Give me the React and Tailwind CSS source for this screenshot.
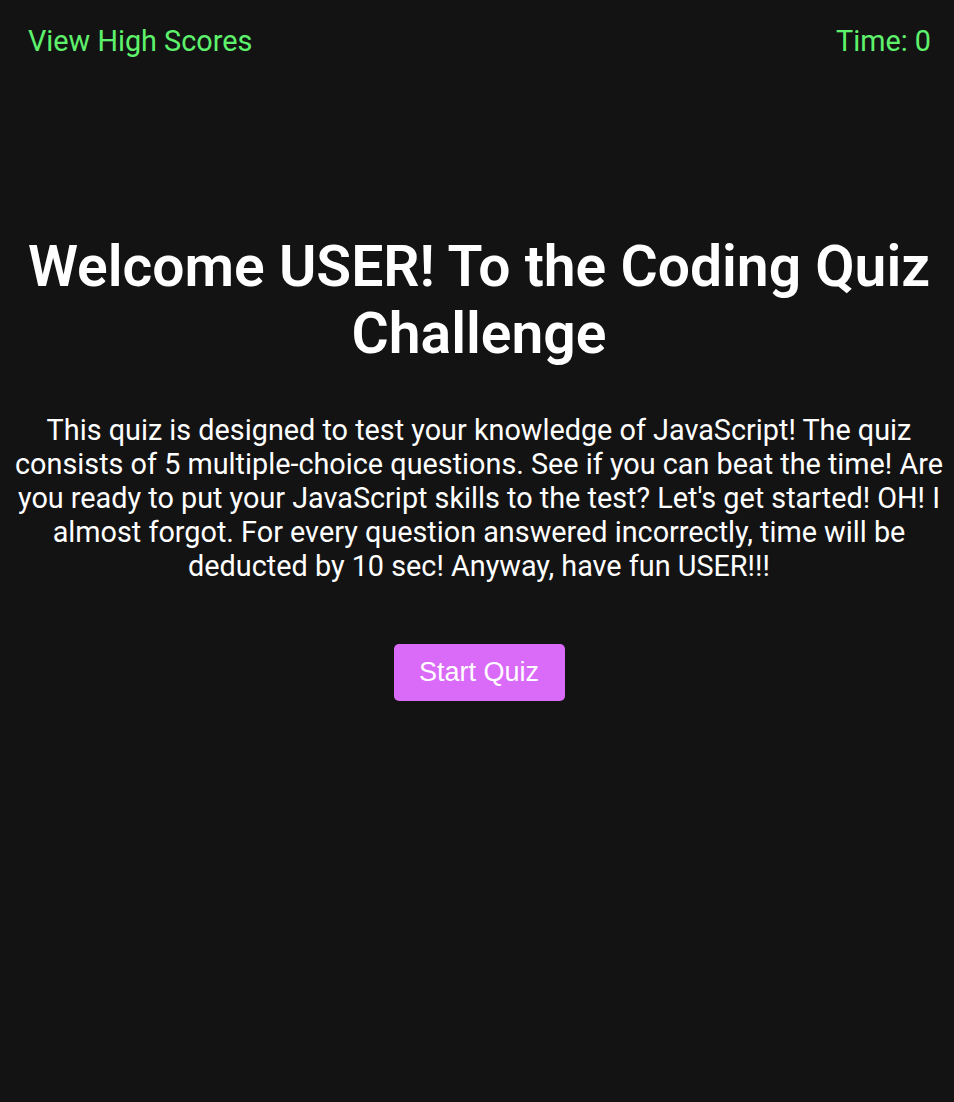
import React from 'react';

const App = () => {
  return (
    <div className="min-h-[1102px] bg-[#141314] text-white font-['Roboto',sans-serif]">
      <header className="flex justify-between items-center pl-7 pr-[23px] pt-[24px] text-[28.8px] leading-[normal] text-[#5ef26c]">
        <a href="#" className="cursor-pointer">View High Scores</a>
        <span>Time: 0</span>
      </header>

      <main className="flex flex-col items-center text-center pl-[10px] pr-[6px] pt-[175px]">
        <h1 className="text-[57px] leading-[normal] font-semibold">
          Welcome USER! To the Coding Quiz Challenge
        </h1>
        <p className="mt-[46px] text-[28.8px] leading-[normal]">
          This quiz is designed to test your knowledge of JavaScript! The quiz consists of 5 multiple-choice questions. See if you can beat the time! Are you ready to put your JavaScript skills to the test? Let's get started! OH! I almost forgot. For every question answered incorrectly, time will be deducted by 10 sec! Anyway, have fun USER!!!
        </p>
        <button className="mt-[61px] w-[171px] h-[57px] rounded-[5px] bg-[#da6af8] text-white text-[27px] font-['Liberation_Sans',sans-serif]">
          Start Quiz
        </button>
      </main>
    </div>
  );
};

export default App;
